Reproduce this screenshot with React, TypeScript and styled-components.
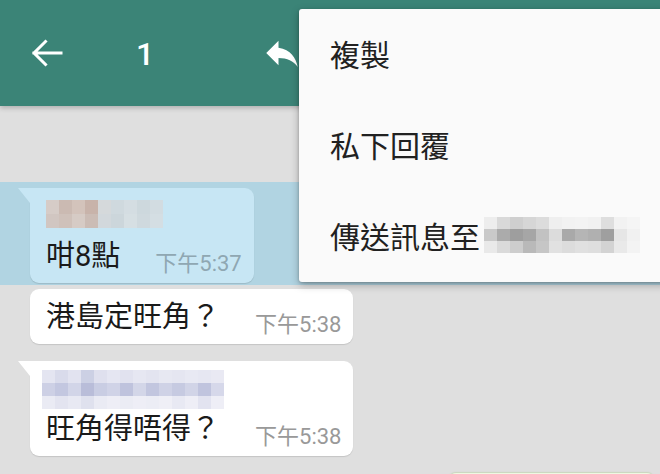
import styled, { createGlobalStyle } from "styled-components";

const GlobalStyle = createGlobalStyle`
  html, body {
    margin: 0;
    padding: 0;
    background: #dfdfdf;
  }
  * {
    box-sizing: border-box;
  }
`;

const FONT = `Roboto, "Noto Sans CJK TC", "Noto Sans CJK SC", sans-serif`;

const Screen = styled.div`
  position: relative;
  width: 660px;
  height: 474px;
  overflow: hidden;
  background: #dfdfdf;
  font-family: ${FONT};
`;

const TopBar = styled.header`
  position: relative;
  z-index: 1;
  height: 106px;
  display: flex;
  align-items: center;
  background: #3b8477;
  box-shadow: 0 2px 5px rgba(0, 0, 0, 0.22);
  color: #fff;
`;

const IconButton = styled.div<{ $left: number; $size: number }>`
  display: flex;
  align-items: center;
  justify-content: center;
  width: ${(p) => p.$size}px;
  height: ${(p) => p.$size}px;
  margin-left: ${(p) => p.$left}px;
`;

const Count = styled.div`
  margin-left: 73px;
  width: 17px;
  font-size: 32px;
  font-weight: 500;
  line-height: 1;
  margin-top: 2px;
`;

const Chat = styled.div`
  display: flex;
  flex-direction: column;
  padding-top: 76px;
`;

const Row = styled.div<{ $selected?: boolean; $top?: number; $end?: boolean }>`
  display: flex;
  justify-content: ${(p) => (p.$end ? "flex-end" : "flex-start")};
  padding: ${(p) => (p.$selected ? "6px 0 2px 30px" : "0 0 0 30px")};
  margin-top: ${(p) => p.$top ?? 0}px;
  background: ${(p) => (p.$selected ? "#b1d4e2" : "transparent")};
`;

const Bubble = styled.div<{ $bg: string; $tail?: boolean; $pad: string }>`
  position: relative;
  display: flex;
  flex-direction: column;
  padding: ${(p) => p.$pad};
  background: ${(p) => p.$bg};
  border-radius: ${(p) => (p.$tail ? "0 9px 9px 9px" : "9px")};
  box-shadow: 0 1px 1px rgba(0, 0, 0, 0.12);

  &::before {
    content: "";
    display: ${(p) => (p.$tail ? "block" : "none")};
    position: absolute;
    top: 0;
    left: -12px;
    width: 12px;
    height: 15px;
    background: ${(p) => p.$bg};
    clip-path: polygon(0 0, 100% 0, 100% 100%);
  }
`;

const OutBubble = styled.div`
  width: 207px;
  height: 40px;
  margin-right: 5px;
  background: #eef8e2;
  border-radius: 8px;
  box-shadow: 0 -1px 1px rgba(140, 190, 90, 0.25);
`;

const Line = styled.div`
  display: flex;
  align-items: flex-end;
  gap: 35px;
`;

const MsgText = styled.span<{ $indent?: number }>`
  margin-left: ${(p) => p.$indent ?? 0}px;
  font-size: 29px;
  line-height: 34px;
  color: #1a1a1a;
  white-space: nowrap;
`;

const Time = styled.span<{ $color: string }>`
  font-size: 22px;
  line-height: 24px;
  margin-bottom: -3px;
  color: ${(p) => p.$color};
  white-space: nowrap;
`;

const Pixels = styled.div<{ $cols: number; $cell: number; $rowH: number }>`
  display: grid;
  grid-template-columns: repeat(${(p) => p.$cols}, ${(p) => p.$cell}px);
  grid-auto-rows: ${(p) => p.$rowH}px;
  width: max-content;
  filter: blur(0.6px);
`;

const Cell = styled.div<{ $c: string }>`
  background: ${(p) => p.$c};
`;

const Menu = styled.div`
  position: absolute;
  z-index: 2;
  top: 9px;
  left: 299px;
  width: 370px;
  display: flex;
  flex-direction: column;
  background: #fafafa;
  border-radius: 3px;
  box-shadow: 0 3px 8px rgba(0, 0, 0, 0.28), 0 1px 3px rgba(0, 0, 0, 0.2);
`;

const MenuItem = styled.div`
  display: flex;
  align-items: center;
  gap: 4px;
  height: 91px;
  padding: 0 0 4px 31px;
  font-size: 30px;
  color: #212121;
`;

const Name = styled.div<{ $gap: number }>`
  margin-bottom: ${(p) => p.$gap}px;
`;

function Blur({
  rows,
  cell,
  rowH,
}: {
  rows: string[][];
  cell: number;
  rowH: number;
}) {
  return (
    <Pixels $cols={rows[0].length} $cell={cell} $rowH={rowH}>
      {rows.flat().map((c, i) => (
        <Cell key={i} $c={c} />
      ))}
    </Pixels>
  );
}

const name1 = [
  ["#d6ccc7", "#cbbab2", "#d3c3bb", "#c8b3aa", "#d5d9db", "#cfd9de", "#d4dde2", "#cdd8dd", "#d2dce1"],
  ["#d1c6c1", "#cfc1ba", "#d6cbc5", "#cbbcb5", "#d2d8dc", "#ccd6db", "#d6dfe3", "#cfd9de", "#d4dee3"],
];

const name3 = [
  ["#e4e5f1", "#d9dbeb", "#e2e3f0", "#ccd0e4", "#dfe0ee", "#e5e6f2", "#e1e2ef", "#e6e7f2", "#e3e4f0", "#e7e8f2", "#e5e6f1", "#e8e9f3", "#e6e7f2", "#e9e9f3"],
  ["#cdd0e5", "#c3c7e0", "#d2d5e8", "#b9bdd9", "#c9cde3", "#d0d3e7", "#bfc3dd", "#d3d6e8", "#c2c6df", "#cfd2e6", "#c6cae1", "#d1d4e7", "#c0c4de", "#d6d8ea"],
  ["#eaebf4", "#e3e4f0", "#e8e9f3", "#dfe1ee", "#eaebf4", "#eeeef6", "#ebecf4", "#eeeef6", "#ecedf5", "#efeff6", "#e8e9f3", "#eeeef6", "#e2e3f0", "#eeeef6"],
];

const menuName = [
  ["#ededed", "#d9d9d9", "#cfcfcf", "#d6d6d6", "#dcdcdc", "#efefef", "#f2f2f2", "#f3f3f3", "#f1f1f1", "#dedede", "#f2f2f2", "#f5f5f5"],
  ["#c9c9c9", "#ababab", "#9e9e9e", "#a6a6a6", "#c2c2c2", "#dcdcdc", "#a9a9a9", "#b5b5b5", "#b0b0b0", "#9f9f9f", "#e6e6e6", "#f1f1f1"],
  ["#e9e9e9", "#dadada", "#cdcdcd", "#b9b9b9", "#c6c6c6", "#e1e1e1", "#dcdcdc", "#e0e0e0", "#dedede", "#d3d3d3", "#e9e9e9", "#f3f3f3"],
];

function BackArrow() {
  return (
    <svg width="32" height="28" viewBox="0 0 32 28" fill="none">
      <path
        d="M3 14H30M14.5 2.5L3 14l11.5 11.5"
        stroke="#fff"
        strokeWidth="3"
        strokeLinecap="square"
      />
    </svg>
  );
}

function ReplyIcon() {
  return (
    <svg width="42" height="42" viewBox="0 0 24 24">
      <path
        fill="#fff"
        d="M10 9V5l-7 7 7 7v-4.1c5 0 8.5 1.6 11 5.1-1-5-4-10-11-11z"
      />
    </svg>
  );
}

export default function App() {
  return (
    <>
      <GlobalStyle />
      <Screen>
        <TopBar>
          <IconButton $left={31} $size={32}>
            <BackArrow />
          </IconButton>
          <Count>1</Count>
          <IconButton $left={108} $size={42}>
            <ReplyIcon />
          </IconButton>
        </TopBar>

        <Chat>
          <Row $selected>
            <Bubble $bg="#c7e6f4" $tail $pad="12px 12px 10px 16px">
              <Name $gap={11}>
                <Blur rows={name1} cell={13} rowH={14} />
              </Name>
              <Line>
                <MsgText>咁8點</MsgText>
                <Time $color="#8fa7b2">下午5:37</Time>
              </Line>
            </Bubble>
          </Row>

          <Row $top={4}>
            <Bubble $bg="#ffffff" $pad="11px 12px 10px 16px">
              <Line>
                <MsgText>港島定旺角？</MsgText>
                <Time $color="#999999">下午5:38</Time>
              </Line>
            </Bubble>
          </Row>

          <Row $top={17}>
            <Bubble $bg="#ffffff" $tail $pad="9px 12px 10px 12px">
              <Name $gap={3}>
                <Blur rows={name3} cell={13} rowH={13} />
              </Name>
              <Line>
                <MsgText $indent={4}>旺角得唔得？</MsgText>
                <Time $color="#999999">下午5:38</Time>
              </Line>
            </Bubble>
          </Row>

          <Row $top={17} $end>
            <OutBubble />
          </Row>
        </Chat>

        <Menu>
          <MenuItem>複製</MenuItem>
          <MenuItem>私下回覆</MenuItem>
          <MenuItem>
            傳送訊息至
            <Blur rows={menuName} cell={13} rowH={12} />
          </MenuItem>
        </Menu>
      </Screen>
    </>
  );
}
